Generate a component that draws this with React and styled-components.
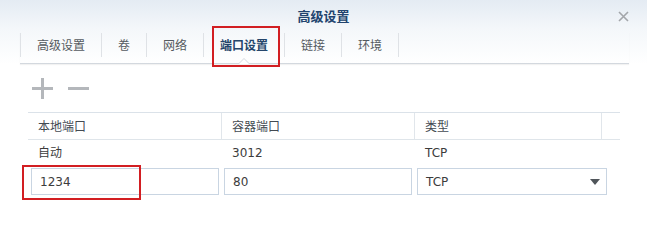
import React from "react";
import styled, { createGlobalStyle } from "styled-components";

const GlobalStyle = createGlobalStyle`
  html, body {
    margin: 0;
    padding: 0;
    background: #ffffff;
  }
  body {
    font-family: "DejaVu Sans", "Noto Sans CJK SC", sans-serif;
    font-size: 12px;
    color: #3a3a3a;
  }
`;

const tabs = ["高级设置", "卷", "网络", "端口设置", "链接", "环境"];
const activeTab = "端口设置";

const columns = ["本地端口", "容器端口", "类型"];
const rows = [["自动", "3012", "TCP"]];

function App() {
  return (
    <Window>
      <GlobalStyle />
      <Head>
        <TitleBar>
          <span />
          <Title>高级设置</Title>
          <CloseButton type="button" aria-label="close">
            <svg width="11" height="11" viewBox="0 0 11 11">
              <path d="M1 1 L10 10 M10 1 L1 10" stroke="#a3a6aa" strokeWidth="1.6" fill="none" />
            </svg>
          </CloseButton>
        </TitleBar>
        <TabBar>
          {tabs.map((t) => (
            <Tab key={t} $active={t === activeTab}>
              {t}
              {t === activeTab && <TabMark />}
            </Tab>
          ))}
        </TabBar>
      </Head>

      <Toolbar>
        <IconButton type="button" aria-label="add">
          <svg width="21" height="21" viewBox="0 0 21 21">
            <path d="M0 10.5 H21 M10.5 0 V21" stroke="#b4b7bb" strokeWidth="3" fill="none" />
          </svg>
        </IconButton>
        <IconButton type="button" aria-label="remove">
          <svg width="21" height="21" viewBox="0 0 21 21">
            <path d="M0 10.5 H21" stroke="#b4b7bb" strokeWidth="3" fill="none" />
          </svg>
        </IconButton>
      </Toolbar>

      <Table>
        <HeaderRow>
          {columns.map((c) => (
            <HeadCell key={c}>{c}</HeadCell>
          ))}
          <HeadCell />
        </HeaderRow>
        {rows.map((r, i) => (
          <DataRow key={i}>
            {r.map((v, j) => (
              <Cell key={j}>{v}</Cell>
            ))}
            <Cell />
          </DataRow>
        ))}
      </Table>

      <EditRow>
        <FieldWrap>
          <Field defaultValue="1234" />
          <Mark />
        </FieldWrap>
        <Field defaultValue="80" />
        <SelectBox $wide>
          <span>TCP</span>
          <svg width="10" height="6" viewBox="0 0 10 6">
            <path d="M0 0 H10 L5 6 Z" fill="#50555a" />
          </svg>
        </SelectBox>
      </EditRow>
    </Window>
  );
}

const Window = styled.div`
  width: 647px;
  height: 243px;
  background: #ffffff;
  overflow: hidden;
`;

const Head = styled.div`
  background: linear-gradient(to bottom, #e4ebf3 0%, #f4f7fa 45%, #ffffff 100%);
  padding-bottom: 0;
`;

const TitleBar = styled.div`
  height: 32px;
  display: grid;
  grid-template-columns: 1fr auto 1fr;
  align-items: center;
`;

const Title = styled.div`
  font-family: "Noto Sans CJK SC", sans-serif;
  font-size: 13px;
  font-weight: bold;
  color: #22446e;
  line-height: 30px;
`;

const CloseButton = styled.button`
  justify-self: end;
  margin-right: 18px;
  padding: 0;
  border: none;
  background: none;
  display: flex;
  cursor: pointer;
`;

const TabBar = styled.div`
  display: flex;
  height: 31px;
  margin: 0 18px 0 20px;
  border-bottom: 1px solid #d3d8de;
  box-shadow: 0 1px 1px rgba(0, 0, 0, 0.05);
`;

const Tab = styled.div`
  position: relative;
  margin-top: 1px;
  height: 24px;
  padding: 0 16px;
  border-right: 1px solid #dfe2e6;
  &:first-child {
    border-left: 1px solid #dfe2e6;
  }
  font-family: "Noto Sans CJK SC", sans-serif;
  font-size: 12px;
  line-height: 24px;
  font-weight: ${(p) => (p.$active ? "bold" : "normal")};
  color: ${(p) => (p.$active ? "#24456b" : "#555a60")};

  ${(p) =>
    p.$active &&
    `
    &::before {
      content: "";
      position: absolute;
      left: 50%;
      bottom: -7px;
      margin-left: -6px;
      border-left: 6px solid transparent;
      border-right: 6px solid transparent;
      border-bottom: 6px solid #d3d8de;
    }
    &::after {
      content: "";
      position: absolute;
      left: 50%;
      bottom: -7px;
      margin-left: -5px;
      border-left: 5px solid transparent;
      border-right: 5px solid transparent;
      border-bottom: 5px solid #ffffff;
    }
  `}
`;

const TabMark = styled.span`
  position: absolute;
  left: 8px;
  right: 4px;
  top: -7px;
  height: 37px;
  border: 2px solid #d21e22;
  pointer-events: none;
`;

const Toolbar = styled.div`
  height: 48px;
  display: flex;
  align-items: center;
  gap: 15px;
  padding-left: 32px;
`;

const IconButton = styled.button`
  padding: 0;
  border: none;
  background: none;
  display: flex;
  cursor: pointer;
`;

const Table = styled.div`
  margin-left: 28px;
  width: 592px;
  border-top: 1px solid #dbe2e9;
`;

const gridCols = "194px 193px 187px 18px";

const HeaderRow = styled.div`
  display: grid;
  grid-template-columns: ${gridCols};
  height: 26px;
  border-bottom: 1px solid #dfe5ea;
`;

const HeadCell = styled.div`
  padding-left: 10px;
  line-height: 26px;
  font-family: "Noto Sans CJK SC", sans-serif;
  color: #434a52;
  border-right: 1px solid #e1e6eb;
  &:last-child {
    border-right: none;
  }
`;

const DataRow = styled.div`
  display: grid;
  grid-template-columns: ${gridCols};
  height: 27px;
`;

const Cell = styled.div`
  padding-left: 10px;
  line-height: 27px;
  color: #3c3c3c;
`;

const EditRow = styled.div`
  display: flex;
  gap: 5px;
  margin: 1px 0 0 31px;
`;

const FieldWrap = styled.div`
  position: relative;
  display: flex;
`;

const Field = styled.input`
  box-sizing: border-box;
  width: 188px;
  height: 27px;
  padding: 0 8px;
  border: 1px solid #c9d5e2;
  font-family: "DejaVu Sans", sans-serif;
  font-size: 12px;
  color: #3c3c3c;
  outline: none;
`;

const Mark = styled.span`
  position: absolute;
  left: -9px;
  top: -3px;
  width: 115px;
  height: 31px;
  border: 2px solid #d21e22;
  pointer-events: none;
`;

const SelectBox = styled.div`
  box-sizing: border-box;
  width: ${(p) => (p.$wide ? "190px" : "188px")};
  height: 27px;
  padding: 0 6px 0 8px;
  border: 1px solid #c9d5e2;
  display: flex;
  align-items: center;
  justify-content: space-between;
  color: #3c3c3c;
`;

export default App;
